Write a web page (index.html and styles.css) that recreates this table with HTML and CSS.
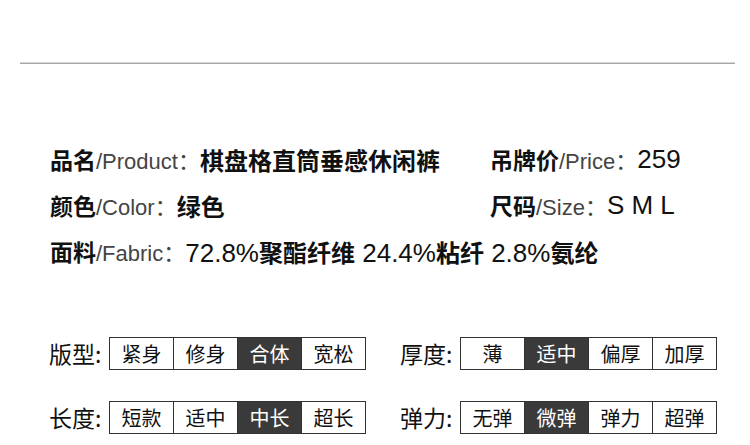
FILE: index.html
```html
<!DOCTYPE html>
<html lang="zh-CN">
<head>
    <meta charset="UTF-8">
    <title>商品信息</title>
    <link rel="stylesheet" href="styles.css">
</head>
<body>
    <div class="page">
        <hr class="divider">

        <div class="info">
            <div class="info-item"><b>品名</b><span class="en">/Product：</span><b class="val">棋盘格直筒垂感休闲裤</b></div>
            <div class="info-item"><b>吊牌价</b><span class="en">/Price：</span><span class="num">259</span></div>
            <div class="info-item"><b>颜色</b><span class="en">/Color：</span><b class="val">绿色</b></div>
            <div class="info-item"><b>尺码</b><span class="en">/Size：</span><span class="num">S M L</span></div>
            <div class="info-item wide"><b>面料</b><span class="en">/Fabric：</span><span class="num">72.8%<b class="val">聚酯纤维</b> 24.4%<b class="val">粘纤</b> 2.8%<b class="val">氨纶</b></span></div>
        </div>

        <div class="specs">
            <div class="spec">
                <span class="spec-label">版型:</span>
                <div class="options">
                    <span class="opt">紧身</span>
                    <span class="opt">修身</span>
                    <span class="opt active">合体</span>
                    <span class="opt">宽松</span>
                </div>
            </div>
            <div class="spec">
                <span class="spec-label">厚度:</span>
                <div class="options">
                    <span class="opt">薄</span>
                    <span class="opt active">适中</span>
                    <span class="opt">偏厚</span>
                    <span class="opt">加厚</span>
                </div>
            </div>
            <div class="spec">
                <span class="spec-label">长度:</span>
                <div class="options">
                    <span class="opt">短款</span>
                    <span class="opt">适中</span>
                    <span class="opt active">中长</span>
                    <span class="opt">超长</span>
                </div>
            </div>
            <div class="spec">
                <span class="spec-label">弹力:</span>
                <div class="options">
                    <span class="opt">无弹</span>
                    <span class="opt active">微弹</span>
                    <span class="opt">弹力</span>
                    <span class="opt">超弹</span>
                </div>
            </div>
        </div>
    </div>
</body>
</html>
```

FILE: styles.css
```css
body {
    margin: 0;
    background: #ffffff;
    color: #111111;
    font-family: "Liberation Sans", "Noto Sans CJK SC", sans-serif;
}

.page {
    width: 750px;
    height: 445px;
    overflow: hidden;
}

.divider {
    margin: 62px 0 0 20px;
    width: 715px;
    height: 0;
    border: none;
    border-top: 1px solid #d6d6d6;
    border-bottom: 1px solid #a6a6a6;
}

/* product info */
.info {
    display: grid;
    grid-template-columns: 440px auto;
    grid-auto-rows: 46px;
    margin-top: 72px;
    padding-left: 50px;
}

.info-item {
    display: flex;
    align-items: center;
    font-size: 22px;
    white-space: nowrap;
}

.info-item.wide {
    grid-column: 1 / 3;
}

.info-item b {
    font-family: "Noto Sans CJK SC", sans-serif;
    font-size: 23px;
    font-weight: 700;
}

.info-item b.val {
    font-size: 24px;
}

.info-item .en {
    color: #444444;
    font-weight: 400;
}

.info-item .num {
    font-size: 26px;
    color: #111111;
}

/* spec tables */
.specs {
    display: grid;
    grid-template-columns: 351px 351px;
    row-gap: 30px;
    margin-top: 62px;
    padding-left: 49px;
}

.spec {
    display: flex;
    align-items: center;
}

.spec-label {
    width: 60px;
    font-family: "Noto Sans CJK SC", sans-serif;
    font-size: 23px;
    color: #111111;
}

.options {
    display: flex;
    border: 1px solid #333333;
    border-left: none;
}

.opt {
    width: 63px;
    height: 31px;
    border-left: 1px solid #333333;
    display: flex;
    align-items: center;
    justify-content: center;
    font-family: "Noto Sans CJK SC", sans-serif;
    font-size: 20px;
    color: #111111;
}

.opt.active {
    background: #3a3a3a;
    color: #ffffff;
}
```
